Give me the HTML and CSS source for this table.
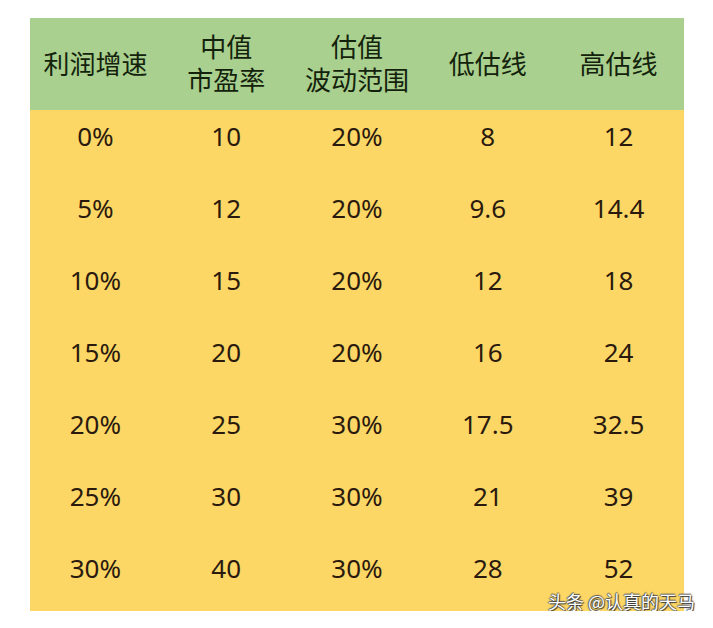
FILE: index.html
```html
<!DOCTYPE html>
<html lang="zh">
<head>
<meta charset="utf-8">
<link rel="stylesheet" href="styles.css">
</head>
<body>
<div class="page">
  <div class="table">
    <div class="row head">
      <div class="cell">利润增速</div>
      <div class="cell"><span>中值</span><span>市盈率</span></div>
      <div class="cell"><span>估值</span><span>波动范围</span></div>
      <div class="cell">低估线</div>
      <div class="cell">高估线</div>
    </div>
    <div class="row"><div class="cell">0%</div><div class="cell">10</div><div class="cell">20%</div><div class="cell">8</div><div class="cell">12</div></div>
    <div class="row"><div class="cell">5%</div><div class="cell">12</div><div class="cell">20%</div><div class="cell">9.6</div><div class="cell">14.4</div></div>
    <div class="row"><div class="cell">10%</div><div class="cell">15</div><div class="cell">20%</div><div class="cell">12</div><div class="cell">18</div></div>
    <div class="row"><div class="cell">15%</div><div class="cell">20</div><div class="cell">20%</div><div class="cell">16</div><div class="cell">24</div></div>
    <div class="row"><div class="cell">20%</div><div class="cell">25</div><div class="cell">30%</div><div class="cell">17.5</div><div class="cell">32.5</div></div>
    <div class="row"><div class="cell">25%</div><div class="cell">30</div><div class="cell">30%</div><div class="cell">21</div><div class="cell">39</div></div>
    <div class="row last"><div class="cell">30%</div><div class="cell">40</div><div class="cell">30%</div><div class="cell">28</div><div class="cell">52</div></div>
    <div class="watermark">头条 @认真的天马</div>
  </div>
</div>
</body>
</html>
```
FILE: styles.css
```css
html, body {
  margin: 0;
  padding: 0;
  background: #ffffff;
}
.page {
  padding: 18px 0 0 30px;
  font-family: "Noto Sans", "Noto Sans CJK SC", sans-serif;
}
.table {
  position: relative;
  width: 654px;
  background: #fdd765;
}
.row {
  display: grid;
  grid-template-columns: repeat(5, 1fr);
  height: 72px;
  color: #2a1a0e;
  font-size: 26px;
}
.row.last {
  height: 69px;
}
.row .cell {
  display: flex;
  justify-content: center;
  line-height: 53px;
  height: 53px;
}
.row.head {
  height: 92px;
  background: #a9d08e;
  color: #14220c;
}
.row.head .cell {
  height: 92px;
  line-height: 33px;
  flex-direction: column;
  align-items: center;
  justify-content: center;
}
.watermark {
  position: absolute;
  left: 518px;
  top: 572px;
  font-size: 18px;
  line-height: 22px;
  color: #ffffff;
  font-family: "Noto Sans CJK SC", sans-serif;
  white-space: nowrap;
  text-shadow: 1px 1px 1px #333333, -1px 0 1px #555555, 0 -1px 1px #555555;
}
```
